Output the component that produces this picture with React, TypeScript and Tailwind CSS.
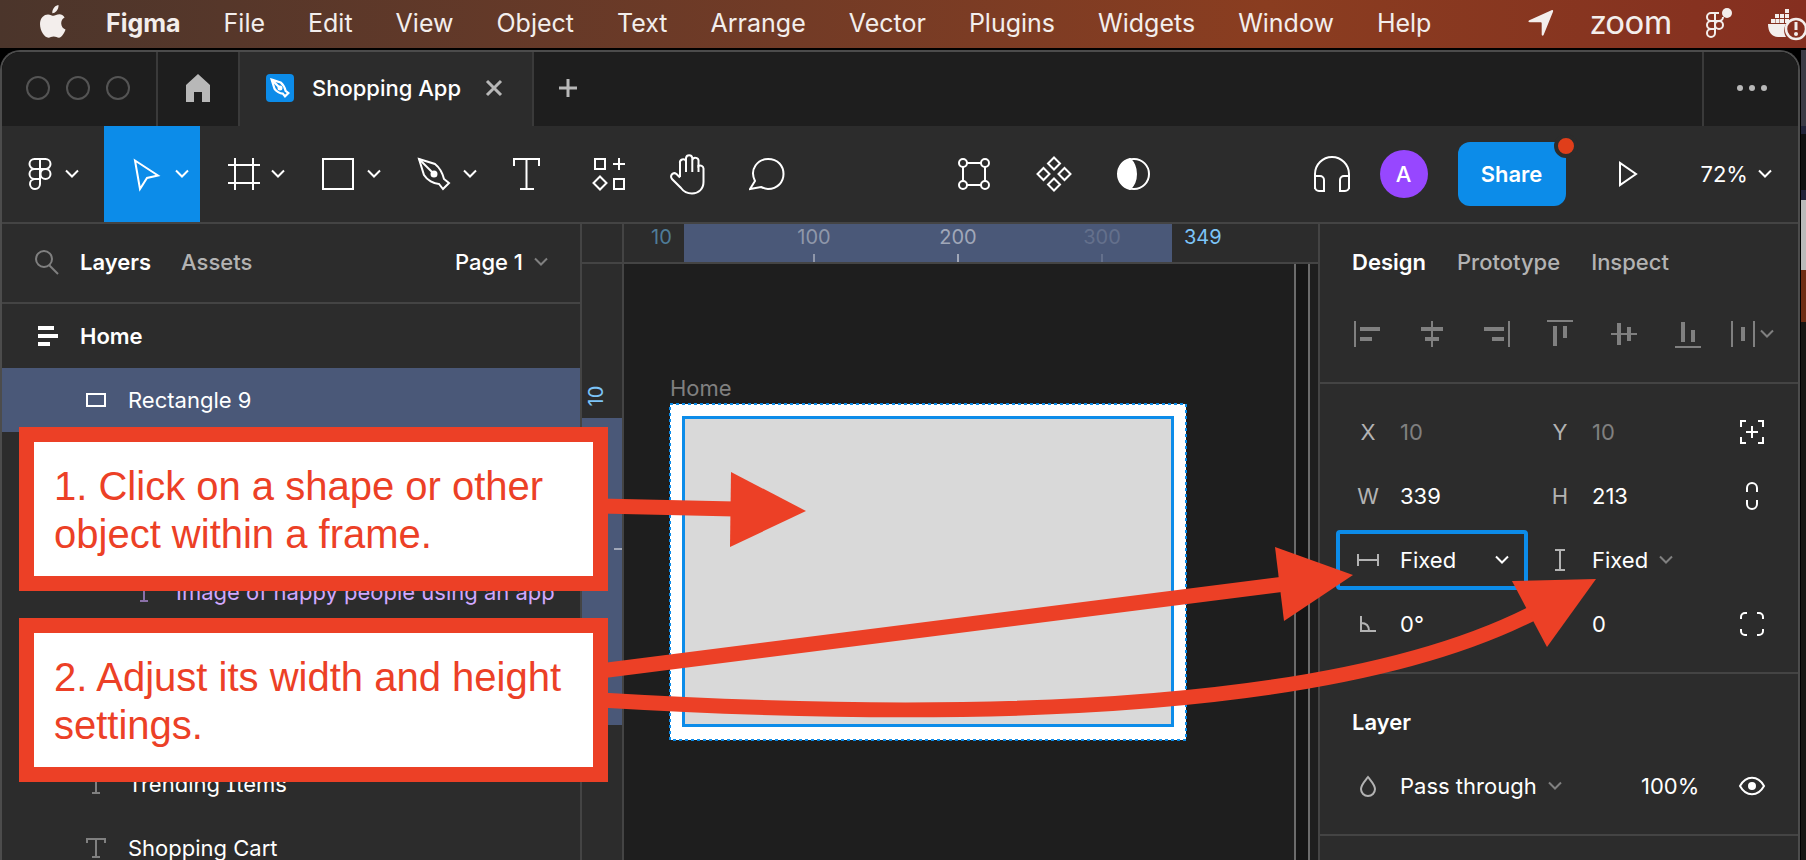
import React, { useState } from "react";
import clsx from "clsx";

interface IconProps {
  w?: number;
  h?: number;
  className?: string;
  children: React.ReactNode;
}

const Icon = ({ w = 36, h = 36, className, children }: IconProps) => (
  <svg
    width={w}
    height={h}
    viewBox={`0 0 ${w} ${h}`}
    fill="none"
    stroke="currentColor"
    strokeWidth={2}
    className={clsx("shrink-0", className)}
    aria-hidden="true"
  >
    {children}
  </svg>
);

const Chevron = ({ className }: { className?: string }) => (
  <Icon w={14} h={10} className={className}>
    <path d="M1 1.5 7 7.5 13 1.5" />
  </Icon>
);

const PenShape = () => (
  <>
    <path d="M3 3 19 8 C24 12 27 19 28 23 L33 27 27 33 23 28 C18 28 11 24 8 19 Z" />
    <path d="M3 3 16 16" />
    <circle cx="18" cy="18" r="2.5" fill="currentColor" />
  </>
);

const FigmaIcon = ({ className }: { className?: string }) => (
  <Icon className={className}>
    <path d="M18 3h-5.5a5 5 0 0 0 0 10H18zM18 3h5.500a5 5 0 0 1 0 10H18zM18 13h-5.500a5 5 0 0 0 0 10H18zM18 23h-5.500a5 5 0 1 0 5.500 5z" />
    <circle cx="23.500" cy="18" r="5" />
  </Icon>
);

const menus = [
  "File",
  "Edit",
  "View",
  "Object",
  "Text",
  "Arrange",
  "Vector",
  "Plugins",
  "Widgets",
  "Window",
  "Help",
];

const MenuBar = () => (
  <header className="flex h-12 shrink-0 items-center overflow-hidden bg-linear-to-r from-[#4b352b] via-[#8a3d20] via-70% to-[#852f20] pb-0.5 pl-[39px] text-[25px] leading-9 text-[#f3eeec]">
    <button aria-label="Apple menu">
      <svg width="28" height="36" viewBox="0 0 28 36" fill="currentColor">
        <path d="M19.500 0c.3 2.600-.8 4.800-2.200 6.300-1.200 1.300-2.800 2-4 1.900-.3-2.300.8-4.600 2.100-6C16.500.9 18.300.1 19.500 0z" />
        <path d="M25.600 12.500c-2.100 1.300-3.400 3.100-3.400 5.700 0 3 1.700 5.300 4.300 6.300-.9 2.700-3.500 8.200-6.600 8.200-1.900 0-2.900-1.200-5.200-1.200-2.300 0-3.500 1.200-5.200 1.200C5.300 32.700 1 25.800 1 19.100 1 12.700 5 9.400 9 9.400c2.300 0 4.200 1.400 5.500 1.400 1.300 0 3.500-1.600 6.100-1.600 1.700 0 3.700 1 5 3.300z" />
      </svg>
    </button>
    <nav className="ml-[39px] flex items-center gap-[43px]">
      <button className="font-bold">Figma</button>
      {menus.map((menu) => (
        <button key={menu}>{menu}</button>
      ))}
    </nav>
    <div className="ml-auto flex items-center">
      <svg width="26" height="26" viewBox="0 0 26 26" fill="currentColor">
        <path d="M23.500.2c1-.4 2 .3 1.500 1.500L15.600 24.900c-.5 1.200-1.900 1-1.900-.3V13.200c0-.6-.3-.9-.9-.9H1.600c-1.300 0-1.500-1.500-.3-2z" />
      </svg>
      <span className="ml-9 pb-1 font-['Lato',sans-serif] text-[34px] leading-8">
        zoom
      </span>
      <svg
        width="32"
        height="34"
        viewBox="0 0 32 34"
        fill="none"
        stroke="currentColor"
        strokeWidth="2"
        className="ml-8"
      >
        <path d="M11 7H7a4 4 0 0 0 0 8h4zM11 7h4M11 15h4a4 4 0 0 0 4-4M11 15H7a4 4 0 0 0 0 8h4zM11 23H7a4 4 0 1 0 4 4z" />
        <circle cx="15" cy="19" r="4" />
        <circle cx="23" cy="7" r="5" fill="currentColor" stroke="none" />
      </svg>
      <svg
        width="38"
        height="36"
        viewBox="0 0 38 36"
        fill="currentColor"
        className="ml-8"
      >
        <path d="M17 4h4v4h-4zM7 9h4v4H7zM12 9h4v4h-4zM17 9h4v4h-4zM3 14h4v4H3zM7.500 14h4v4h-4zM12 14h4v4h-4zM17 14h4v4h-4z" />
        <path d="M0 19h18c-3 5-2 10 0 13H10C4 32 0 27 0 19z" />
        <circle cx="28" cy="24" r="10" fill="none" stroke="currentColor" strokeWidth="2.500" />
        <path d="M26.500 17h3v8h-3z" />
        <circle cx="28" cy="29" r="2" />
      </svg>
    </div>
  </header>
);

const TabBar = () => (
  <div className="flex h-[74px] shrink-0 bg-[#1e1e1e] text-[#b8b8b8]">
    <div className="flex w-[156px] items-center gap-4 border-r-2 border-[#3a3a3a] pb-0.5 pl-6">
      <span className="size-6 rounded-full border-2 border-[#545454]" />
      <span className="size-6 rounded-full border-2 border-[#545454]" />
      <span className="size-6 rounded-full border-2 border-[#545454]" />
    </div>
    <button
      aria-label="Home"
      className="flex w-[82px] items-center justify-center border-r-2 border-[#3a3a3a] pb-0.5"
    >
      <svg width="26" height="30" viewBox="0 0 26 30" fill="currentColor">
        <path d="M13 1 25 12v17h-8V19H9v10H1V12z" />
      </svg>
    </button>
    <div className="flex w-[294px] items-center border-r-2 border-[#3a3a3a] bg-[#2c2c2c] pb-0.5 pl-[26px]">
      <span className="flex size-7 items-center justify-center rounded bg-[#0c8ce9] text-white">
        <svg
          width="20"
          height="20"
          viewBox="0 0 36 36"
          fill="none"
          stroke="currentColor"
          strokeWidth="4"
        >
          <PenShape />
        </svg>
      </span>
      <span className="ml-[18px] text-[22px] font-medium text-white">
        Shopping App
      </span>
      <button aria-label="Close tab" className="mr-[29px] ml-auto">
        <Icon w={18} h={18}>
          <path d="m2 2 14 14M16 2 2 16" strokeWidth="3" />
        </Icon>
      </button>
    </div>
    <button aria-label="New tab" className="w-[68px] pb-0.5 pl-6">
      <Icon w={20} h={20}>
        <path d="M10 1v18M1 10h18" strokeWidth="3" />
      </Icon>
    </button>
    <button
      aria-label="More"
      className="ml-auto flex w-24 items-center justify-center border-l-2 border-[#3a3a3a] pb-0.5"
    >
      <svg width="32" height="8" viewBox="0 0 32 8" fill="currentColor">
        <circle cx="5" cy="4" r="3" />
        <circle cx="17" cy="4" r="3" />
        <circle cx="29" cy="4" r="3" />
      </svg>
    </button>
  </div>
);

interface ToolProps {
  label: string;
  active?: boolean;
  children: React.ReactNode;
}

const MenuTool = ({ label, active, children }: ToolProps) => (
  <button
    aria-label={label}
    className={clsx(
      "flex w-24 items-center gap-[11px] pl-6",
      active && "bg-[#0c8ce9]"
    )}
  >
    {children}
    <Chevron />
  </button>
);

const Tool = ({ label, children }: ToolProps) => (
  <button aria-label={label} className="flex w-20 items-center justify-center">
    {children}
  </button>
);

const Toolbar = () => (
  <div className="flex h-[98px] shrink-0 justify-between border-b-2 border-[#444] bg-[#2c2c2c] text-white">
    <div className="flex">
      <button
        aria-label="Main menu"
        className="flex w-[102px] items-center gap-[7px] pl-5"
      >
        <FigmaIcon />
        <Chevron />
      </button>
      <MenuTool label="Move" active>
        <Icon>
          <path d="M7 4.500 30 19.500 19 22 12 33z" />
        </Icon>
      </MenuTool>
      <MenuTool label="Frame">
        <Icon>
          <path d="M11 2v32M29 2v32M4 9h32M4 27h32" />
        </Icon>
      </MenuTool>
      <MenuTool label="Rectangle">
        <Icon>
          <path d="M3 3h30v30H3z" />
        </Icon>
      </MenuTool>
      <MenuTool label="Pen">
        <Icon>
          <PenShape />
        </Icon>
      </MenuTool>
      <Tool label="Text">
        <Icon>
          <path d="M4 10V3h25v7M16.500 3v30M10 33h14" />
        </Icon>
      </Tool>
      <Tool label="Resources">
        <Icon>
          <path d="M5 3h10v10H5zM24 23h10v10H24zM29 2v12M23 8h12M10 20.500 16.500 27 10 33.500 3.500 27z" />
        </Icon>
      </Tool>
      <Tool label="Hand">
        <Icon w={38} h={42}>
          <path d="M11 24V10a3.200 3.200 0 0 1 6-2V5a3.200 3.200 0 0 1 6.300 0v2a3.200 3.200 0 0 1 6.200 1.500V13a3.200 3.200 0 0 1 5 2.500V29c0 7-5 11.500-11.500 11.500-5 0-8.500-2-11-5.500L3 26c-2.500-3.500 1-7.500 4.500-5L11 24.500" />
          <path d="M17 7v12M23.300 7v12M29.500 12v7" />
        </Icon>
      </Tool>
      <Tool label="Comment">
        <Icon w={38} h={36}>
          <path d="M6 25C0 13 9 3 19 3s15.500 7 15.500 15-6 15-15.500 15c-3 0-5-1-7-2L1 33z" />
        </Icon>
      </Tool>
    </div>
    <div className="flex">
      <Tool label="Edit object">
        <Icon>
          <circle cx="7" cy="7" r="4" />
          <circle cx="29" cy="7" r="4" />
          <circle cx="7" cy="29" r="4" />
          <circle cx="29" cy="29" r="4" />
          <path d="M11 7h14M11 29h14M7 11v14M29 11v14" />
        </Icon>
      </Tool>
      <Tool label="Create component">
        <Icon>
          <path d="m18 1.500 6 6-6 6-6-6zM18 22.500l6 6-6 6-6-6zM7.500 12l6 6-6 6-6-6zM28.500 12l6 6-6 6-6-6z" />
        </Icon>
      </Tool>
      <Tool label="Use as mask">
        <Icon>
          <circle cx="18" cy="18" r="15" />
          <path d="M14 3c8 8 8 22 0 30C-2 29-2 7 14 3z" fill="currentColor" />
        </Icon>
      </Tool>
    </div>
    <div className="flex items-center text-[22px]">
      <button aria-label="Audio" className="flex w-16 justify-center">
        <Icon w={38} h={38}>
          <path d="M2 34V19a17 17 0 0 1 34 0v15" />
          <path d="M2 21h5a4 4 0 0 1 4 4v11H6a4 4 0 0 1-4-4zM36 21h-5a4 4 0 0 0-4 4v11h5a4 4 0 0 0 4-4z" />
        </Icon>
      </button>
      <span className="ml-4 flex size-12 items-center justify-center rounded-full bg-[#9747ff] font-medium">
        A
      </span>
      <div className="relative ml-[30px]">
        <button className="h-16 w-[108px] rounded-xl bg-[#0c8ce9] font-semibold">
          Share
        </button>
        <span className="absolute -top-2 -right-3 size-6 rounded-full border-4 border-[#2c2c2c] bg-[#e03e1a]" />
      </div>
      <button aria-label="Present" className="flex w-[124px] justify-center">
        <Icon w={20} h={26}>
          <path d="M2 2v22l16-11z" />
        </Icon>
      </button>
      <button className="mr-[26px] ml-[11px] flex items-center gap-2.5">
        72%
        <Chevron />
      </button>
    </div>
  </div>
);

const TextGlyph = ({ className }: { className?: string }) => (
  <Icon w={20} h={20} className={className}>
    <path d="M1 5V1h18v4M10 1v18M6 19h8" />
  </Icon>
);

const LayersPanel = () => (
  <aside className="flex w-[580px] shrink-0 flex-col border-r-2 border-[#444] bg-[#2c2c2c] text-[22px] text-white">
    <div className="flex h-20 shrink-0 items-center border-b-2 border-[#444] pr-8 pb-0.5 pl-8">
      <button aria-label="Search layers" className="text-[#808080]">
        <Icon w={26} h={28}>
          <circle cx="10" cy="11" r="8" />
          <path d="m15 17 9 9" />
        </Icon>
      </button>
      <button className="ml-5 font-semibold">Layers</button>
      <button className="ml-[30px] font-medium text-[#b3b3b3]">Assets</button>
      <button className="ml-auto flex items-center gap-[11px] font-medium">
        Page 1
        <Chevron className="text-[#808080]" />
      </button>
    </div>
    <ul>
      <li className="flex h-16 items-center pl-[34px] font-semibold">
        <svg width="24" height="20" viewBox="0 0 24 20" fill="currentColor">
          <path d="M2 0h16v4H2zM2 8h20v4H2zM2 16h12v4H2z" />
        </svg>
        <span className="ml-5">Home</span>
      </li>
      <li className="flex h-16 items-center bg-[#4a5878] pl-[84px]">
        <Icon w={20} h={16}>
          <path d="M1 2h18v12H1z" />
        </Icon>
        <span className="ml-[22px]">Rectangle 9</span>
      </li>
      <li className="h-32" />
      <li className="flex h-16 items-center pl-[132px] text-[#d1a8ff]">
        <TextGlyph className="text-[#8a70a8]" />
        <span className="ml-[22px]">Image of happy people using an app</span>
      </li>
      <li className="h-32" />
      <li className="flex h-16 items-center pl-[84px]">
        <TextGlyph className="text-[#808080]" />
        <span className="ml-[22px] [font-feature-settings:'cv08']">
          Trending Items
        </span>
      </li>
      <li className="flex h-16 items-center pl-[84px]">
        <TextGlyph className="text-[#808080]" />
        <span className="ml-[22px]">Shopping Cart</span>
      </li>
    </ul>
  </aside>
);

const Canvas = () => (
  <section className="flex min-w-0 flex-1 flex-col overflow-hidden bg-[#1e1e1e]">
    <div className="flex h-10 shrink-0 border-b-2 border-[#444] bg-[#2c2c2c] text-xl leading-[26px]">
      <div className="w-[42px] shrink-0 border-r-2 border-[#444]" />
      <div className="relative flex-1">
        <span className="absolute left-[27px] text-[#4f7c99]">10</span>
        <div className="absolute left-[60px] h-full w-[488px] bg-[#4a5878]">
          <span className="absolute left-[98px] flex w-16 flex-col items-center text-[#8f97aa]">
            100
            <i className="mt-1 h-2 w-0.5 bg-[#8f97aa]" />
          </span>
          <span className="absolute left-[242px] flex w-16 flex-col items-center text-[#a0a7b8]">
            200
            <i className="mt-1 h-2 w-0.5 bg-[#a0a7b8]" />
          </span>
          <span className="absolute left-[386px] flex w-16 flex-col items-center text-[#64708c]">
            300
            <i className="mt-1 h-2 w-0.5 bg-[#64708c]" />
          </span>
        </div>
        <span className="absolute left-[560px] text-[#7cc4f8]">349</span>
      </div>
    </div>
    <div className="flex min-h-0 flex-1">
      <div className="relative w-[42px] shrink-0 border-r-2 border-[#444] bg-[#2c2c2c]">
        <span className="absolute top-[119px] left-1 -rotate-90 text-xl leading-[26px] text-[#7cc4f8]">
          10
        </span>
        <div className="absolute top-[154px] h-[307px] w-full bg-[#4a5878]">
          <i className="absolute top-[130px] right-0 h-0.5 w-2 bg-[#a0a7b8]" />
        </div>
      </div>
      <div className="relative flex-1 overflow-hidden">
        <span className="absolute top-[108px] left-[46px] text-[22px] leading-8 text-[#808080]">
          Home
        </span>
        <div className="absolute top-[140px] left-[46px] h-[336px] w-[516px] bg-white px-3 pt-3">
          <svg className="absolute inset-0 h-full w-full overflow-visible">
            <rect
              width="100%"
              height="100%"
              fill="none"
              stroke="#0c8ce9"
              strokeWidth="2"
              strokeDasharray="3 3"
            />
          </svg>
          <div className="h-[311px] border-[3px] border-[#0c8ce9] bg-[#d9d9d9]" />
        </div>
        <div className="absolute right-2 h-full w-4 border-x-2 border-[#6b6b6b] bg-[#151515]" />
      </div>
    </div>
  </section>
);

interface FieldProps {
  id: string;
  label: string;
  value: string;
  muted?: boolean;
}

const Field = ({ id, label, value, muted }: FieldProps) => {
  const [text, setText] = useState(value);
  return (
    <div className="flex w-48 items-center">
      <label htmlFor={id} className="w-16 text-center text-[#b3b3b3]">
        {label}
      </label>
      <input
        id={id}
        value={text}
        onChange={(e) => setText(e.target.value)}
        className={clsx(
          "w-24 bg-transparent outline-none",
          muted ? "text-[#808080]" : "text-white"
        )}
      />
    </div>
  );
};

const SizingOptions = () => (
  <>
    <option>Fixed</option>
    <option>Hug</option>
    <option>Fill</option>
  </>
);

const DesignPanel = () => (
  <aside className="w-[480px] shrink-0 border-l-2 border-[#444] bg-[#2c2c2c] text-[22px] text-white">
    <nav className="flex h-[76px] items-center gap-[31px] pl-8 font-medium text-[#b3b3b3]">
      <button className="font-semibold text-white">Design</button>
      <button>Prototype</button>
      <button>Inspect</button>
    </nav>
    <div className="flex h-[84px] border-b-2 border-[#444] pb-3.5 pl-4 text-[#808080]">
      <button aria-label="Align left" className="flex w-16 items-center justify-center">
        <Icon w={28} h={28}>
          <path d="M1 1v26" />
          <path d="M6 9h20M6 19h12" strokeWidth="4" />
        </Icon>
      </button>
      <button aria-label="Align horizontal centers" className="flex w-16 items-center justify-center">
        <Icon w={28} h={28}>
          <path d="M14 1v26" />
          <path d="M3 9h22M7 19h14" strokeWidth="4" />
        </Icon>
      </button>
      <button aria-label="Align right" className="flex w-16 items-center justify-center">
        <Icon w={28} h={28}>
          <path d="M27 1v26" />
          <path d="M2 9h20M10 19h12" strokeWidth="4" />
        </Icon>
      </button>
      <button aria-label="Align top" className="flex w-16 items-center justify-center">
        <Icon w={28} h={28}>
          <path d="M1 1h26" />
          <path d="M9 6v20M19 6v12" strokeWidth="4" />
        </Icon>
      </button>
      <button aria-label="Align vertical centers" className="flex w-16 items-center justify-center">
        <Icon w={28} h={28}>
          <path d="M1 14h26" />
          <path d="M9 3v22M19 7v14" strokeWidth="4" />
        </Icon>
      </button>
      <button aria-label="Align bottom" className="flex w-16 items-center justify-center">
        <Icon w={28} h={28}>
          <path d="M1 27h26" />
          <path d="M9 2v20M19 10v12" strokeWidth="4" />
        </Icon>
      </button>
      <button aria-label="Distribute" className="flex w-16 items-center justify-center gap-1">
        <Icon w={26} h={28}>
          <path d="M2 1v26M24 1v26" />
          <path d="M13 7v14" strokeWidth="4" />
        </Icon>
        <Chevron />
      </button>
    </div>

    <div className="border-b-2 border-[#444] py-4 pl-4">
      <div className="flex h-16 items-center">
        <Field id="pos-x" label="X" value="10" muted />
        <Field id="pos-y" label="Y" value="10" muted />
        <button aria-label="Absolute position" className="flex w-16 justify-center">
          <Icon w={26} h={26}>
            <path d="M2 8V2h5M19 2h5v6M24 18v6h-5M7 24H2v-6M13 7v12M7 13h12" />
          </Icon>
        </button>
      </div>
      <div className="flex h-16 items-center">
        <Field id="width" label="W" value="339" />
        <Field id="height" label="H" value="213" />
        <button aria-label="Constrain proportions" className="flex w-16 justify-center">
          <Icon w={14} h={30}>
            <path d="M2 11V7a5 5 0 0 1 10 0v4M2 19v4a5 5 0 0 0 10 0v-4" />
          </Icon>
        </button>
      </div>
      <div className="flex h-16 items-center">
        <div className="flex h-[60px] w-48 items-center rounded border-4 border-[#0c8ce9]">
          <label
            htmlFor="horizontal-sizing"
            className="flex w-[60px] justify-center pr-1 text-[#b3b3b3]"
            aria-label="Horizontal sizing"
          >
            <Icon w={24} h={12}>
              <path d="M2 0v12M22 0v12M2 6h20" />
            </Icon>
          </label>
          <select
            id="horizontal-sizing"
            className="w-[95px] appearance-none bg-transparent outline-none"
          >
            <SizingOptions />
          </select>
          <Chevron />
        </div>
        <div className="flex w-48 items-center">
          <label
            htmlFor="vertical-sizing"
            className="flex w-16 justify-center text-[#b3b3b3]"
            aria-label="Vertical sizing"
          >
            <Icon w={12} h={24}>
              <path d="M1 2h10M1 22h10M6 2v20" />
            </Icon>
          </label>
          <select
            id="vertical-sizing"
            className="w-[67px] appearance-none bg-transparent outline-none"
          >
            <SizingOptions />
          </select>
          <Chevron className="text-[#808080]" />
        </div>
      </div>
      <div className="flex h-16 items-center">
        <div className="flex w-48 items-center">
          <label
            htmlFor="rotation"
            className="flex w-16 justify-center text-[#b3b3b3]"
            aria-label="Rotation"
          >
            <Icon w={18} h={18}>
              <path d="M2 1v15h15M2 8c5 0 8 3 8 8" />
            </Icon>
          </label>
          <input
            id="rotation"
            defaultValue="0°"
            className="w-24 bg-transparent outline-none"
          />
        </div>
        <Field id="radius" label="" value="0" />
        <button aria-label="Independent corners" className="flex w-16 justify-center">
          <Icon w={26} h={26}>
            <path d="M2 8V6a4 4 0 0 1 4-4h2M18 2h2a4 4 0 0 1 4 4v2M24 18v2a4 4 0 0 1-4 4h-2M8 24H6a4 4 0 0 1-4-4v-2" />
          </Icon>
        </button>
      </div>
    </div>

    <div className="border-b-2 border-[#444] py-4 pl-4">
      <h2 className="flex h-16 items-center pl-4 font-semibold">Layer</h2>
      <div className="flex h-16 items-center">
        <label
          htmlFor="blend"
          className="flex w-16 justify-center text-[#b3b3b3]"
          aria-label="Blend mode"
        >
          <Icon w={18} h={22}>
            <path d="M9 2c4 5 7 8 7 12a7 7 0 0 1-14 0c0-4 3-7 7-12z" />
          </Icon>
        </label>
        <select
          id="blend"
          className="w-[148px] appearance-none bg-transparent outline-none"
        >
          <option>Pass through</option>
          <option>Normal</option>
        </select>
        <Chevron className="text-[#808080]" />
        <input
          aria-label="Opacity"
          defaultValue="100%"
          className="ml-auto w-[79px] bg-transparent outline-none"
        />
        <button aria-label="Toggle visibility" className="mr-3.5 flex w-16 justify-center">
          <Icon w={28} h={20}>
            <path d="M2 10c6-11 18-11 24 0-6 11-18 11-24 0z" />
            <circle cx="14" cy="10" r="3" fill="currentColor" />
          </Icon>
        </button>
      </div>
    </div>
  </aside>
);

const Callout = ({ children }: { children: React.ReactNode }) => (
  <p className="w-[589px] border-[15px] border-[#ec4026] bg-white pt-5 pr-2 pb-[18px] pl-5 font-['Liberation_Sans',sans-serif] text-[40px] leading-[48px] text-[#ec4026]">
    {children}
  </p>
);

const Annotations = () => (
  <div className="pointer-events-none absolute inset-0 overflow-hidden">
    <svg
      width="1806"
      height="860"
      viewBox="0 0 1806 860"
      className="absolute top-0 left-0 max-w-none"
      aria-hidden="true"
    >
      <g fill="none" stroke="#ec4026" strokeWidth="15">
        <path d="M600 506 735 509" />
        <path d="M600 671 1285 584" />
        <path d="M600 700Q1285 741 1535 612" />
      </g>
      <g fill="#ec4026">
        <path d="M731 472 806 511 730 547z" />
        <path d="M1275 547 1353 575 1284 621z" />
        <path d="M1512 581 1596 579 1547 647z" />
      </g>
    </svg>
    <div className="absolute top-[427px] left-[19px] flex flex-col gap-[27px]">
      <Callout>1. Click on a shape or other object within a frame.</Callout>
      <Callout>2. Adjust its width and height settings.</Callout>
    </div>
  </div>
);

const App = () => (
  <div className="relative flex h-screen flex-col overflow-hidden bg-black font-['Inter',sans-serif]">
    <MenuBar />
    <div className="mt-0.5 flex min-h-0 flex-1">
      <div className="flex min-w-0 flex-1 flex-col overflow-hidden rounded-t-[20px] border-2 border-b-0 border-[#4c4c4c]">
        <TabBar />
        <Toolbar />
        <main className="flex min-h-0 flex-1">
          <LayersPanel />
          <Canvas />
          <DesignPanel />
        </main>
      </div>
      {/* sliver of the windows behind */}
      <div className="flex w-1.5 shrink-0 flex-col border-l border-black bg-[#171613]">
        <div className="h-[76px] bg-[#3b3b45]" />
        <div className="h-2 bg-[#22243a]" />
        <div className="h-14 bg-[#101010]" />
        <div className="h-2.5 bg-[#22243a]" />
        <div className="h-[70px] bg-[#bababa]" />
        <div className="h-[52px] bg-[#6e2d14]" />
      </div>
    </div>
    <Annotations />
  </div>
);

export default App;
